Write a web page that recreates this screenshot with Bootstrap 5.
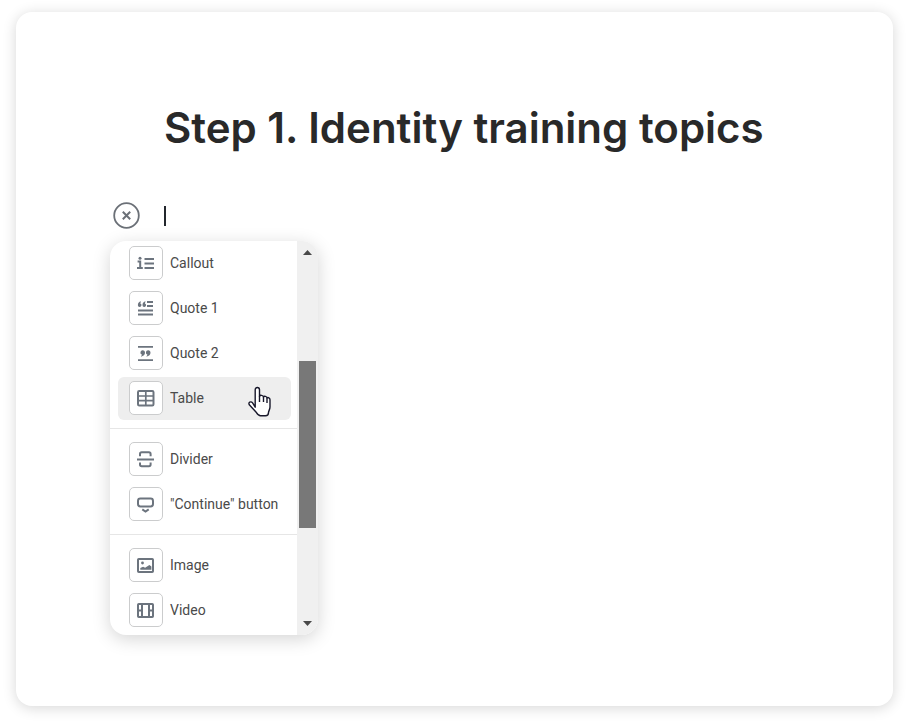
<!DOCTYPE html>
<html lang="en">
<head>
<meta charset="utf-8">
<meta name="viewport" content="width=device-width, initial-scale=1">
<title>Lesson editor</title>
<link href="https://cdn.jsdelivr.net/npm/bootstrap@5.3.0/dist/css/bootstrap.min.css" rel="stylesheet">
<style>
body { background: #fff; font-family: Roboto, "Liberation Sans", sans-serif; }
.sheet { margin: 12px 16px 19px; min-height: calc(100vh - 31px); padding: 88px 94px 64px; border-radius: 16px; box-shadow: 0 2px 14px rgba(0,0,0,.16); background: #fff; }
.lesson-title { margin: 0 0 0 54px; font: 600 42px/56px Inter, sans-serif; color: #292929; }
.entry { margin: 46px 0 12px 3px; gap: 24px; }
.close-btn { width: 27px; height: 27px; color: #6b7077; }
.line-input { height: 20px; border: 0; border-left: 2px solid #23272d; outline: 0; padding: 0 8px; font-size: 16px; background: none; }
.insert-menu { width: 208px; height: 394px; border-radius: 16px; background: #fff; box-shadow: 0 4px 18px rgba(0,0,0,.17); }
.groups { padding-top: 1px; }
.menu-group { padding: 0 6px 8px 8px; gap: 2px; }
.menu-group + .menu-group { border-top: 1px solid #e6e6e6; padding-top: 9px; }
.menu-group:last-child { padding-bottom: 0; }
.entry-item { height: 43px; padding: 0 11px 1px; gap: 7px; border-radius: 6px; font-size: 14px; line-height: 20px; color: #4a4a4a; background: none; white-space: nowrap; }
.entry-item.is-hover { background: #eee; }
.glyph { width: 34px; height: 34px; border: 1px solid #cbcccd; border-radius: 5px; background: #fff; color: #6c747e; }
.glyph svg { stroke-width: 2; }
.scroll-track { width: 21px; padding: 9px 2px; background: #f0f0f0; }
.scroll-thumb { width: 17px; height: 167px; margin-top: 106px; background: #787878; }
.hand { right: 19px; top: 9px; }
</style>
<script src="https://cdn.jsdelivr.net/npm/bootstrap@5.3.0/dist/js/bootstrap.bundle.min.js"></script>
</head>
<body>
<main class="sheet">
  <h1 class="lesson-title">Step 1. Identity training topics</h1>
  <div class="entry d-flex align-items-center">
    <button type="button" class="close-btn btn p-0 border-0 d-flex" aria-label="Close menu">
      <svg width="27" height="27" viewBox="0 0 27 27" fill="none" stroke="currentColor"><circle cx="13.5" cy="13.5" r="12.3" stroke-width="1.8"/><path d="M9.8 9.8l7.4 7.4M17.2 9.8l-7.4 7.4" stroke-width="2"/></svg>
    </button>
    <input class="line-input flex-grow-1" type="text" aria-label="Lesson text">
  </div>
  <div class="insert-menu d-flex overflow-hidden">
    <div class="groups flex-grow-1">
      <div class="menu-group d-flex flex-column">
        <button type="button" class="entry-item border-0 d-flex align-items-center"><span class="glyph d-flex align-items-center justify-content-center flex-shrink-0"><svg width="18" height="18" viewBox="0 0 18 18" fill="none" stroke="currentColor"><path d="M.6 7.6h2.6v6M0 14h5.8M7.5 5h9.5M7.5 9.5h9.5M7.5 14h9.5"/><circle cx="3" cy="4.2" r="1.5" fill="currentColor" stroke="none"/></svg></span>Callout</button>
        <button type="button" class="entry-item border-0 d-flex align-items-center"><span class="glyph d-flex align-items-center justify-content-center flex-shrink-0"><svg width="18" height="18" viewBox="0 0 18 18" fill="none" stroke="currentColor"><path d="M10 3h6M10 7h6M1 11.5h15M1 15.5h15"/><g fill="currentColor" stroke="none"><path d="M4 2.2L3.3 4.5A1.8 1.8 0 1 1 .9 6.2C.8 4.2 1.8 2.8 4 2.2z"/><path d="M8.6 2.2L7.9 4.5A1.8 1.8 0 1 1 5.5 6.2C5.4 4.2 6.4 2.8 8.6 2.2z"/></g></svg></span>Quote 1</button>
        <button type="button" class="entry-item border-0 d-flex align-items-center"><span class="glyph d-flex align-items-center justify-content-center flex-shrink-0"><svg width="18" height="18" viewBox="0 0 18 18" fill="currentColor"><path d="M1 2h15v1.8H1zM1 15.3h15v1.8H1z"/><path d="M3.8 12.7l1.2-2A2.3 2.3 0 1 1 8 8.6c.1 2.3-1.4 3.7-4.2 4.1zM9.3 12.7l1.2-2a2.3 2.3 0 1 1 3-2.1c.1 2.3-1.4 3.7-4.2 4.1z" stroke="none"/></svg></span>Quote 2</button>
        <button type="button" class="entry-item is-hover position-relative border-0 d-flex align-items-center"><span class="glyph d-flex align-items-center justify-content-center flex-shrink-0"><svg width="18" height="18" viewBox="0 0 18 18" fill="none" stroke="currentColor"><rect x="1" y="2" width="15.5" height="14.5" rx="1.2"/><path d="M8.8 2v14M1 7h15M1 11.7h15" stroke-width="1.7"/></svg></span>Table
          <svg class="hand position-absolute" width="24" height="32" viewBox="0 0 24 32" aria-hidden="true"><path d="M7.2 21.2V3.8c0-3.1 4.3-3.1 4.3 0v6.4c.4-1.4 3.6-1.2 4 .8.7-1.2 3.1-.8 3.5.9.9-.8 3 0 3 1.9v7.2c0 2.4-1.5 4-1.5 5.6 0 1.8-1.3 3.2-3 3.2h-5c-2 0-3.1-1.7-4.3-3.5L1.3 18.8c-1.5-2.7 1.8-3.9 3.3-1.9l2.6 4.3z" fill="#fff" stroke="#17172a" stroke-width="1.4" stroke-linejoin="round"/><path d="M11.5 10v6M15.5 11v5M19 12v5" stroke="#17172a" stroke-width="1.4"/></svg>
        </button>
      </div>
      <div class="menu-group d-flex flex-column">
        <button type="button" class="entry-item border-0 d-flex align-items-center"><span class="glyph d-flex align-items-center justify-content-center flex-shrink-0"><svg width="18" height="18" viewBox="0 0 18 18" fill="none" stroke="currentColor"><path d="M3 6.3V4c0-1.1.6-1.7 1.7-1.7h7.2c1.1 0 1.7.6 1.7 1.7v2.3M3 12.6v2c0 1.1.6 1.7 1.7 1.7h7.2c1.1 0 1.7-.6 1.7-1.7v-2M0 9.5h17"/></svg></span>Divider</button>
        <button type="button" class="entry-item border-0 d-flex align-items-center"><span class="glyph d-flex align-items-center justify-content-center flex-shrink-0"><svg width="18" height="18" viewBox="0 0 18 18" fill="none" stroke="currentColor"><rect x="1" y="3.5" width="15" height="8" rx="2.4"/><path d="M5.3 14.4l3.2 2.2 3.2-2.2"/></svg></span>"Continue" button</button>
      </div>
      <div class="menu-group d-flex flex-column">
        <button type="button" class="entry-item border-0 d-flex align-items-center"><span class="glyph d-flex align-items-center justify-content-center flex-shrink-0"><svg width="18" height="18" viewBox="0 0 18 18" fill="none" stroke="currentColor"><rect x="1" y="3" width="15" height="13" rx=".8"/><circle cx="5.5" cy="7" r="1.4" fill="currentColor" stroke="none"/><path d="M3.3 13.8v-1.7l2.8-1.3 2 1 4.3-2.7 2 1.5v3.2z" fill="currentColor" stroke="none"/></svg></span>Image</button>
        <button type="button" class="entry-item border-0 d-flex align-items-center"><span class="glyph d-flex align-items-center justify-content-center flex-shrink-0"><svg width="18" height="18" viewBox="0 0 18 18" fill="none" stroke="currentColor"><rect x="1" y="3" width="15" height="13" rx=".8"/><path d="M5 3v13M12 3v13M1 9.5h4M12 9.5h4"/></svg></span>Video</button>
      </div>
    </div>
    <div class="scroll-track d-flex flex-column align-items-center" aria-hidden="true">
      <svg width="9" height="5" viewBox="0 0 9 5"><path d="M0 5L4.5 0 9 5z" fill="#494949"/></svg>
      <div class="scroll-thumb"></div>
      <svg class="mt-auto" width="9" height="5" viewBox="0 0 9 5"><path d="M0 0L4.5 5 9 0z" fill="#494949"/></svg>
    </div>
  </div>
</main>
</body>
</html>
